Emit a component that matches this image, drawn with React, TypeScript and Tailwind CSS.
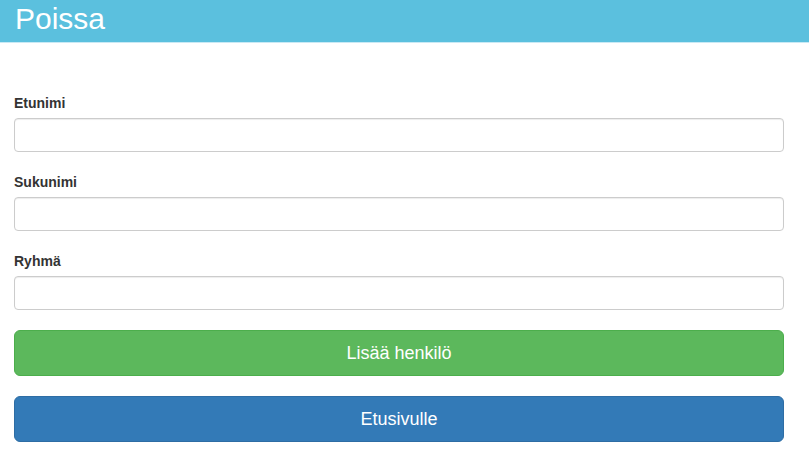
import React from "react";

const fields = ["Etunimi", "Sukunimi", "Ryhmä"];

const App = () => {
  return (
    <div className="min-h-[460px] bg-white font-['Liberation_Sans',Arial,sans-serif] text-[#333]">
      <div className="h-[43px] border-b border-[#c9e9f4] bg-[#5bc0de] pl-[15px] pt-[2px]">
        <h1 className="text-[30px] leading-[33px] font-normal text-white">Poissa</h1>
      </div>
      <form className="ml-[14px] w-[770px] pt-[50px]">
        {fields.map((f) => (
          <div key={f} className="mb-[20px]">
            <label className="mb-[5px] block text-[14px] leading-[20px] font-bold">{f}</label>
            <input
              type="text"
              className="block h-[34px] w-full rounded-[4px] border border-[#ccc] px-3 shadow-[inset_0_1px_1px_rgba(0,0,0,0.075)] outline-none"
            />
          </div>
        ))}
        <button
          type="button"
          className="mb-[20px] block h-[46px] w-full rounded-[6px] border border-[#4cae4c] bg-[#5cb85c] text-[18px] text-white"
        >
          Lisää henkilö
        </button>
        <button
          type="button"
          className="block h-[46px] w-full rounded-[6px] border border-[#2e6da4] bg-[#337ab7] text-[18px] text-white"
        >
          Etusivulle
        </button>
      </form>
    </div>
  );
};

export default App;
